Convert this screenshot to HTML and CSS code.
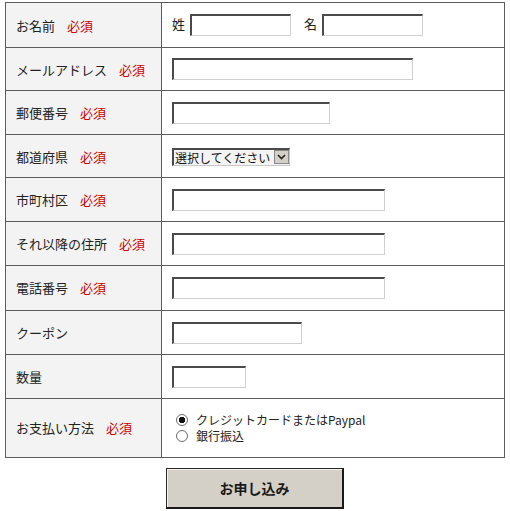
FILE: index.html
```html
<!DOCTYPE html>
<html lang="ja">
<head>
    <meta charset="UTF-8">
    <meta name="viewport" content="width=device-width, initial-scale=1.0">
    <title>お申し込みフォーム</title>
    <link rel="stylesheet" href="styles.css">
</head>
<body>
    <form class="order-form">
        <table class="form-table">
            <tr class="h-24">
                <th>お名前<span class="req">必須</span></th>
                <td>
                    <span class="name-part">姓</span><input type="text" class="w-name">
                    <span class="name-part second">名</span><input type="text" class="w-name">
                </td>
            </tr>
            <tr class="h-22">
                <th>メールアドレス<span class="req">必須</span></th>
                <td><input type="text" class="w-mail"></td>
            </tr>
            <tr class="h-23">
                <th>郵便番号<span class="req">必須</span></th>
                <td><input type="text" class="w-zip"></td>
            </tr>
            <tr class="h-22">
                <th>都道府県<span class="req">必須</span></th>
                <td>
                    <span class="select-wrap">
                        <select class="pref">
                            <option>選択してください</option>
                            <option>北海道</option>
                            <option>東京都</option>
                            <option>大阪府</option>
                        </select>
                        <span class="select-arrow">
                            <svg width="9" height="6" viewBox="0 0 9 6"><path d="M1 1 L4.5 4.5 L8 1" fill="none" stroke="#222" stroke-width="1.6"/></svg>
                        </span>
                    </span>
                </td>
            </tr>
            <tr class="h-22">
                <th>市町村区<span class="req">必須</span></th>
                <td><input type="text" class="w-long"></td>
            </tr>
            <tr class="h-23">
                <th>それ以降の住所<span class="req">必須</span></th>
                <td><input type="text" class="w-long"></td>
            </tr>
            <tr class="h-24">
                <th>電話番号<span class="req">必須</span></th>
                <td><input type="text" class="w-long"></td>
            </tr>
            <tr class="h-23">
                <th>クーポン</th>
                <td><input type="text" class="w-coupon"></td>
            </tr>
            <tr class="h-23">
                <th>数量</th>
                <td><input type="text" class="w-qty"></td>
            </tr>
            <tr class="h-38">
                <th>お支払い方法<span class="req">必須</span></th>
                <td>
                    <label class="radio-line"><input type="radio" name="pay" checked>クレジットカードまたはPaypal</label>
                    <label class="radio-line"><input type="radio" name="pay">銀行振込</label>
                </td>
            </tr>
        </table>
        <div class="submit-area">
            <button type="submit" class="submit-btn">お申し込み</button>
        </div>
    </form>
</body>
</html>
```

FILE: styles.css
```css
body {
    margin: 0;
    padding: 2px 0 0 5px;
    background: #fff;
    color: #222;
    font-family: "Noto Sans CJK JP", "DejaVu Sans", sans-serif;
    font-size: 13px;
}
.order-form {
    width: 500px;
}
.form-table {
    width: 500px;
    border-collapse: collapse;
    table-layout: fixed;
}
.form-table th,
.form-table td {
    border: 1px solid #5c5c5c;
    padding: 10px;
    height: 23px;
    vertical-align: middle;
    text-align: left;
    font-weight: normal;
}
.form-table th {
    width: 135px;
    background: #f3f3f3;
}
.h-22 th, .h-22 td { height: 22px; }
.h-23 th, .h-23 td { height: 23px; }
.h-24 th, .h-24 td { height: 24px; }
.h-38 th, .h-38 td { height: 38px; }
.req {
    color: #c00;
    margin-left: 12px;
}
input[type="text"] {
    box-sizing: border-box;
    height: 22px;
    margin: 0;
    padding: 1px 3px;
    border-style: solid;
    border-width: 2px 1px 1px 2px;
    border-color: #4a4a4a #d0d0d0 #d0d0d0 #4a4a4a;
    background: #fff;
    font: inherit;
    vertical-align: middle;
}
.w-name { width: 101px; }
.w-mail { width: 241px; }
.w-zip { width: 158px; }
.w-long { width: 213px; }
.w-coupon { width: 130px; }
.w-qty { width: 74px; }
.name-part {
    margin-right: 5px;
}
.name-part.second {
    margin-left: 10px;
}
.select-wrap {
    position: relative;
    display: inline-block;
    vertical-align: middle;
}
.pref {
    appearance: none;
    -webkit-appearance: none;
    box-sizing: border-box;
    width: 118px;
    height: 18px;
    margin: 0;
    padding: 0 16px 0 1px;
    border-style: solid;
    border-width: 2px 1px 1px 2px;
    border-color: #4a4a4a #c8c8c8 #c8c8c8 #4a4a4a;
    background: #f4f4f4;
    color: #111;
    font-family: inherit;
    font-size: 12px;
    line-height: 14px;
}
.select-arrow {
    position: absolute;
    right: 1px;
    top: 2px;
    width: 15px;
    height: 14px;
    box-sizing: border-box;
    background: #d4d0c8;
    border: 1px solid #8a8a8a;
    display: flex;
    align-items: center;
    justify-content: center;
    pointer-events: none;
}
.radio-line {
    display: flex;
    align-items: center;
    height: 16px;
    line-height: 16px;
    padding-left: 4px;
    font-size: 12px;
}
.radio-line input[type="radio"] {
    appearance: none;
    -webkit-appearance: none;
    box-sizing: border-box;
    width: 12px;
    height: 12px;
    margin: 0 8px 0 0;
    border: 1px solid #6a6a6a;
    border-radius: 50%;
    background: #fff;
}
.radio-line input[type="radio"]:checked {
    background: radial-gradient(circle, #111 0 3px, #fff 3.5px);
}
.submit-area {
    display: flex;
    justify-content: center;
    padding-top: 10px;
}
.submit-btn {
    box-sizing: border-box;
    width: 178px;
    height: 41px;
    background: #d4d0c8;
    border-style: solid;
    border-width: 1px 2px 2px 1px;
    border-color: #2a2a2a #1a1a1a #1a1a1a #2a2a2a;
    box-shadow: inset 1px 1px 0 #f4f2ee;
    color: #1a1a1a;
    font-family: inherit;
    font-size: 14px;
    font-weight: bold;
    cursor: pointer;
}
```
